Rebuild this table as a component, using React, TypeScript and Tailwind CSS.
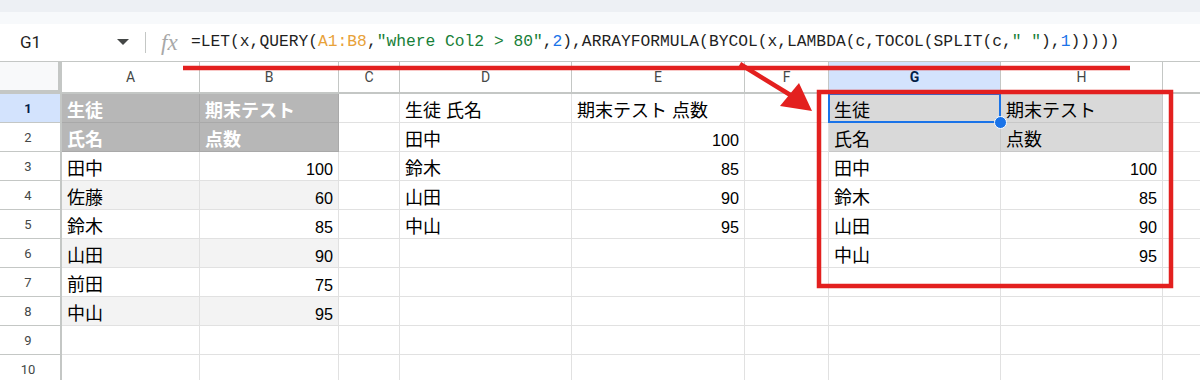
import React from "react";

type Cell = { t?: string; r?: boolean; v?: "plain" | "stripe" | "dark" | "light" };

const widths = [
  "w-[138px]",
  "w-[139px]",
  "w-[61px]",
  "w-[172px]",
  "w-[173px]",
  "w-[84px]",
  "w-[172px]",
  "w-[162px]",
];
const letters = ["A", "B", "C", "D", "E", "F", "G", "H"];

const variantCls: Record<string, string> = {
  plain: "bg-white text-black border-[#e1e1e1]",
  stripe: "bg-[#f3f3f3] text-black border-[#e1e1e1]",
  dark: "bg-[#b7b7b7] text-white font-bold border-[#a9a9a9]",
  light: "bg-[#d9d9d9] text-black border-[#c8c8c8]",
};

const E: Cell = {};
const rows: Cell[][] = [
  [
    { t: "生徒", v: "dark" },
    { t: "期末テスト", v: "dark" },
    E,
    { t: "生徒 氏名" },
    { t: "期末テスト 点数" },
    E,
    { t: "生徒", v: "light" },
    { t: "期末テスト", v: "light" },
  ],
  [
    { t: "氏名", v: "dark" },
    { t: "点数", v: "dark" },
    E,
    { t: "田中" },
    { t: "100", r: true },
    E,
    { t: "氏名", v: "light" },
    { t: "点数", v: "light" },
  ],
  [
    { t: "田中" },
    { t: "100", r: true },
    E,
    { t: "鈴木" },
    { t: "85", r: true },
    E,
    { t: "田中" },
    { t: "100", r: true },
  ],
  [
    { t: "佐藤", v: "stripe" },
    { t: "60", r: true, v: "stripe" },
    E,
    { t: "山田" },
    { t: "90", r: true },
    E,
    { t: "鈴木" },
    { t: "85", r: true },
  ],
  [
    { t: "鈴木" },
    { t: "85", r: true },
    E,
    { t: "中山" },
    { t: "95", r: true },
    E,
    { t: "山田" },
    { t: "90", r: true },
  ],
  [
    { t: "山田", v: "stripe" },
    { t: "90", r: true, v: "stripe" },
    E,
    E,
    E,
    E,
    { t: "中山" },
    { t: "95", r: true },
  ],
  [{ t: "前田" }, { t: "75", r: true }, E, E, E, E, E, E],
  [
    { t: "中山", v: "stripe" },
    { t: "95", r: true, v: "stripe" },
    E,
    E,
    E,
    E,
    E,
    E,
  ],
  [E, E, E, E, E, E, E, E],
  [E, E, E, E, E, E, E, E],
];

const cellFont = {
  fontFamily: '"Liberation Sans", Arial, "Noto Sans CJK JP", sans-serif',
};

export default function App() {
  return (
    <div className="relative w-[1200px] h-[380px] overflow-hidden bg-white">
      {/* top band */}
      <div className="h-[12px] bg-[#edf0f4]" />
      <div className="h-[12px] bg-[#f7f9fb]" />

      {/* formula bar */}
      <div className="flex h-[38px] items-center border-b border-[#c4c7c5] bg-white">
        <div className="w-[20px]" />
        <div className="w-[97px] font-['Roboto'] text-[17px] text-[#1f1f1f]">G1</div>
        <svg width="12" height="7" viewBox="0 0 12 7" className="mt-[-1px]">
          <polygon points="0,0 12,0 6,6" fill="#444746" />
        </svg>
        <div className="ml-[16px] h-[21px] w-px bg-[#c4c7c5]" />
        <div className="ml-[15px] w-[30px] font-['Liberation_Serif'] text-[23px] italic leading-none text-[#a8a8a8]">
          fx
        </div>
        <div className="font-['Liberation_Mono'] text-[16.3px] leading-none whitespace-nowrap text-[#1f1f1f]">
          =LET(x,QUERY(<span className="text-[#e8a23a]">A1:B8</span>,
          <span className="text-[#188038]">"where Col2 &gt; 80"</span>,
          <span className="text-[#1a73e8]">2</span>),ARRAYFORMULA(BYCOL(x,LAMBDA(c,TOCOL(SPLIT(c,
          <span className="text-[#188038]">" "</span>),
          <span className="text-[#1a73e8]">1</span>)))))
        </div>
      </div>

      {/* column header row */}
      <div className="flex h-[32px]">
        <div className="w-[62px] shrink-0 bg-[#f8f9fa] border-r-[4px] border-b-[4px] border-[#c4c7c5]" />
        {letters.map((l, i) => (
          <div
            key={l}
            className={`${widths[i]} shrink-0 flex items-center justify-center border-r border-b-2 font-['Roboto'] text-[14px] ${
              l === "G"
                ? "bg-[#d3e3fd] border-[#c4c7c5] font-bold text-[#041e49]"
                : "bg-white border-[#c4c7c5] text-[#444746]"
            }`}
          >
            {l}
          </div>
        ))}
        <div className="flex-1 bg-white border-b-2 border-[#c4c7c5]" />
      </div>

      {/* rows */}
      {rows.map((row, ri) => (
        <div key={ri} className="flex h-[29px]">
          <div
            className={`w-[62px] shrink-0 flex items-center justify-center pr-[4px] pt-[1px] border-r-2 border-b font-['Roboto'] text-[13px] ${
              ri === 0
                ? "bg-[#d3e3fd] border-[#c4c7c5] font-bold text-[#041e49]"
                : "bg-white border-[#c4c7c5] text-[#444746]"
            }`}
          >
            {ri + 1}
          </div>
          {row.map((c, ci) => (
            <div
              key={ci}
              style={cellFont}
              className={`${widths[ci]} relative shrink-0 flex items-end pb-[2px] px-[5px] border-r border-b leading-[18px] whitespace-nowrap ${
                variantCls[c.v ?? "plain"]
              } ${c.r ? "justify-end text-[16.2px]" : "justify-start text-[18px]"}`}
            >
              {c.t}
              {ri === 0 && ci === 6 && (
                <>
                  <div className="absolute z-10 -left-px -top-px -right-px -bottom-px border-2 border-[#1a73e8]" />
                  <div className="absolute z-10 -right-[7px] -bottom-[7px] h-[13px] w-[13px] rounded-full border border-white bg-[#1a73e8]" />
                </>
              )}
            </div>
          ))}
          <div className="flex-1 border-b border-[#e1e1e1] bg-white" />
        </div>
      ))}

      {/* red annotations */}
      <svg
        className="pointer-events-none absolute left-0 top-0 z-20"
        width="1200"
        height="380"
        viewBox="0 0 1200 380"
      >
        <line x1="183" y1="68" x2="1130" y2="68" stroke="#e3201f" strokeWidth="4.5" />
        <line x1="740" y1="64" x2="792" y2="96" stroke="#e3201f" strokeWidth="4.5" />
        <polygon points="799,83 780,106 812,111" fill="#e3201f" />
        <rect x="819" y="92" width="352" height="194" fill="none" stroke="#e3201f" strokeWidth="4.5" />
      </svg>
    </div>
  );
}
